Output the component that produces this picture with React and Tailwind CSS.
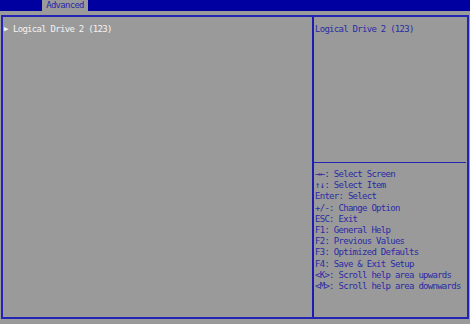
import React from 'react';

const helpLines = [
  { key: '→←', text: ': Select Screen' },
  { key: '↑↓', text: ': Select Item' },
  { key: 'Enter', text: ': Select' },
  { key: '+/-', text: ': Change Option' },
  { key: 'ESC', text: ': Exit' },
  { key: 'F1', text: ': General Help' },
  { key: 'F2', text: ': Previous Values' },
  { key: 'F3', text: ': Optimized Defaults' },
  { key: 'F4', text: ': Save & Exit Setup' },
  { key: '<K>', text: ': Scroll help area upwards' },
  { key: '<M>', text: ': Scroll help area downwards' },
];

const mono = { fontFamily: '"DejaVu Sans Mono", "Liberation Mono", monospace' };

export default function App() {
  return (
    <div
      className="w-[470px] h-[324px] bg-[#9a9a9a] flex flex-col text-[9px] tracking-[-0.72px] leading-[11.2px] overflow-hidden"
      style={mono}
    >
      {/* top menu bar */}
      <div className="h-[11px] bg-[#0000a0] flex">
        <div className="ml-[42px] w-[46px] h-[11px] bg-[#9a9a9a] text-[#2828a8] flex items-center justify-center">
          Advanced
        </div>
      </div>

      {/* main frame */}
      <div className="mt-[4px] ml-[1px] w-[468px] h-[304px] border-2 border-[#2424b4] flex">
        <div className="w-[309px] pt-[7px] pl-[1px]">
          <div className="flex items-center text-[#f4f4f4]">
            <span className="w-[9px] text-[7px] leading-[11.2px]">▶</span>
            <span>Logical Drive 2 (123)</span>
          </div>
        </div>

        <div className="w-[2px] bg-[#1c1cb0]" />

        <div className="flex-1 flex flex-col text-[#2a2aa6]">
          <div className="h-[145px] pt-[7px] pl-[1px]">Logical Drive 2 (123)</div>
          <div className="mr-[1px] h-[1px] bg-[#2424b4]" />
          <div className="pt-[6px] pl-[1px]">
            {helpLines.map((l) => (
              <div key={l.key} className="h-[11.2px] whitespace-nowrap">
                {l.key}
                {l.text}
              </div>
            ))}
          </div>
        </div>
      </div>
    </div>
  );
}
